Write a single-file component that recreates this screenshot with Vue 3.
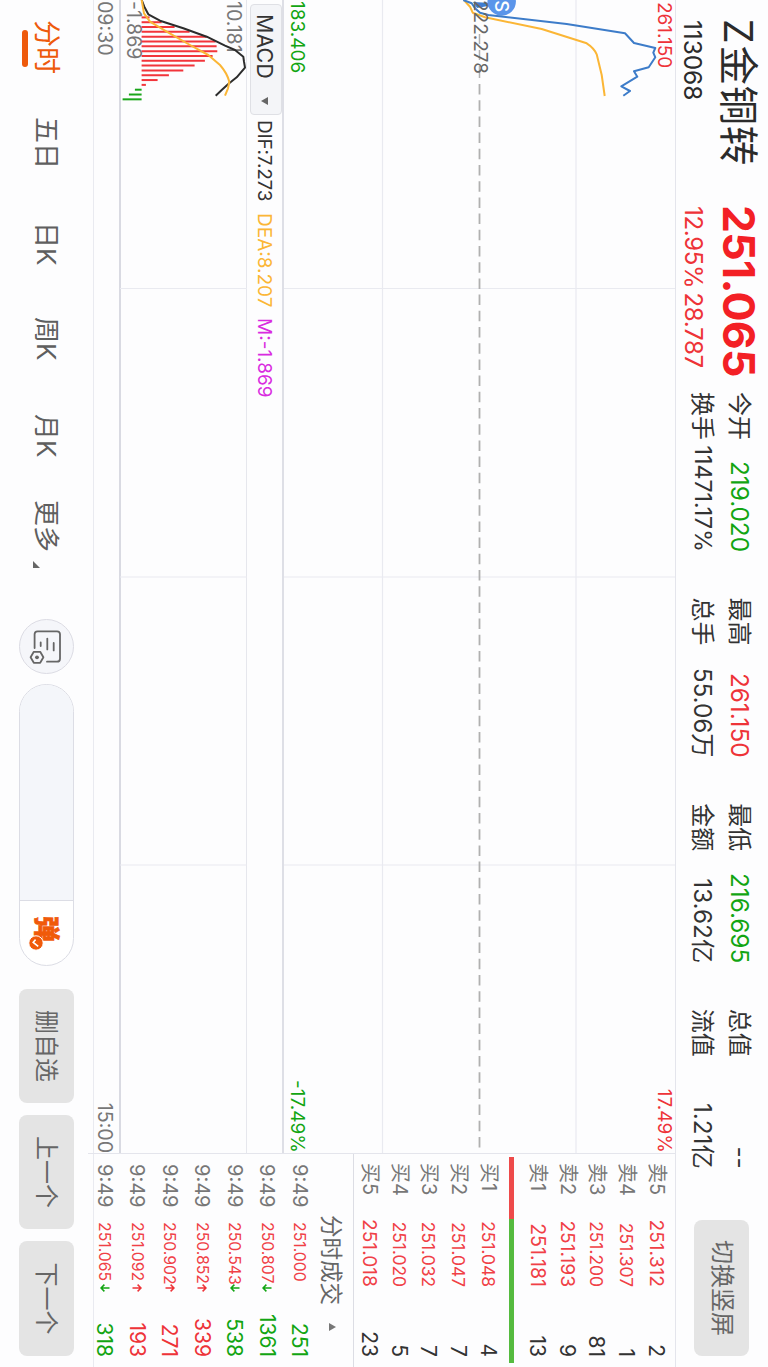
<script setup>
const stats = [
  { label: '今开', value: '219.020', tone: 'green', size: 'num' },
  { label: '最高', value: '261.150', tone: 'red', size: 'num' },
  { label: '最低', value: '216.695', tone: 'green', size: 'num' },
  { label: '总值', value: '--', tone: 'plain', size: 'num' },
  { label: '换手', value: '11471.17%', tone: 'plain', size: 'tight' },
  { label: '总手', value: '55.06万', tone: 'plain', size: 'num' },
  { label: '金额', value: '13.62亿', tone: 'plain', size: 'num' },
  { label: '流值', value: '1.21亿', tone: 'plain', size: 'num' },
]
const sells = [
  ['卖5', '251.312', '2', 'big'],
  ['卖4', '251.307', '1', 'small'],
  ['卖3', '251.200', '81', 'small'],
  ['卖2', '251.193', '9', 'big'],
  ['卖1', '251.181', '13', 'mid'],
]
const buys = [
  ['买1', '251.048', '4', 'small'],
  ['买2', '251.047', '7', 'small'],
  ['买3', '251.032', '7', 'small'],
  ['买4', '251.020', '5', 'small'],
  ['买5', '251.018', '23', 'big'],
]
const ticks = [
  { price: '251.000', dir: '', vol: '251', tone: 'green' },
  { price: '250.807', dir: 'down', vol: '1361', tone: 'green' },
  { price: '250.543', dir: 'down', vol: '538', tone: 'green' },
  { price: '250.852', dir: 'up', vol: '339', tone: 'red' },
  { price: '250.902', dir: 'up', vol: '271', tone: 'red' },
  { price: '251.092', dir: 'up', vol: '193', tone: 'red' },
  { price: '251.065', dir: 'down', vol: '318', tone: 'green' },
]
const histogram = [8, 20, 33, 48, 65, 74, 75, 75.7, 71, 63.3, 53, 41.7, 27.3, 16, 4.3, -6.7, -12.7, -19]
  .map((h, i) => ({ x: 17.4 + i * 4.82, h }))
const tabs = [
  { text: '分时', cls: 't1', active: true },
  { text: '五日', cls: 't2' },
  { text: '日K', cls: 't3' },
  { text: '周K', cls: 't4' },
  { text: '月K', cls: 't5' },
  { text: '更多', cls: 't6', more: true },
]
</script>

<template>
  <div class="stage">
    <main class="screen">
      <header class="header">
        <div class="ident">
          <div class="name"><span class="z">Z</span>金铜转</div>
          <div class="code">113068</div>
        </div>
        <div class="quote red">
          <div class="last">251.065</div>
          <div class="change"><span>12.95%</span><span>28.787</span></div>
        </div>
        <div class="stats">
          <div v-for="s in stats" :key="s.label" class="stat">
            <span class="label">{{ s.label }}</span>
            <span class="value" :class="[s.tone, s.size]">{{ s.value }}</span>
          </div>
        </div>
        <button class="btn rotate">切换竖屏</button>
      </header>

      <section class="body">
        <div class="charts">
          <div class="main-chart">
            <svg width="1153" height="392" viewBox="0 92 1153 392">
              <g stroke="#e9eaf0" stroke-width="1.2">
                <path d="M0 192H1153M0 385.5H1153M288.5 92V484M577 92V484M865 92V484" />
              </g>
              <path d="M84 288.5H1153" stroke="#b0b0b0" stroke-width="1.8" stroke-dasharray="10.5 5.7" />
              <path d="M34 288.5H44M50 288.5H60M66 288.5H78" stroke="#b0b0b0" stroke-width="1.5" />
              <path d="M2 295L8 291L6 280L11 276L3 276Z" fill="#3f7dd0" />
              <circle cx="1.5" cy="266.3" r="14.2" fill="#5b95ea" />
              <text x="6.2" y="273" class="mark">S</text>
              <path class="line yellow" d="M0 304L3.5 301L6.7 298L12.7 295.3L17.3 283L29 226.3L43.3 181.3Q48 174 54.3 171.3L75 166.3L96 163.3" />
              <path class="line blue" d="M0 304.7L3.3 296.3L8.3 293L12.7 288L15 279.7L24 201.3L33.3 143L43 134L48 112.7L52.7 114.7L57.3 112.7L67.3 119.3L71.3 134L76.7 130.7L86.3 146.7L91 138L95.7 144.7" />
            </svg>
            <span class="tag top-left red">261.150</span>
            <span class="tag top-right red">17.49%</span>
            <span class="tag mid-left">222.278</span>
            <span class="tag bottom-left green">183.406</span>
            <span class="tag bottom-right green">-17.49%</span>
          </div>
          <div class="indicator">
            <button class="picker">MACD<i class="caret"></i></button>
            <span class="dif">DIF:7.273</span>
            <span class="dea">DEA:8.207</span>
            <span class="m">M:-1.869</span>
          </div>
          <div class="macd-chart">
            <svg width="1153" height="127" viewBox="0 521 1153 127">
              <path d="M288.5 521V648M577 521V648M865 521V648" stroke="#e9eaf0" stroke-width="1.2" />
              <text x="1" y="541.5" class="scale">10.181</text>
              <text x="1" y="641" class="scale">-1.869</text>
              <path
                v-for="b in histogram" :key="b.x"
                :d="`M${b.x} 626.4V${626.4 - b.h}`"
                :stroke="b.h > 0 ? '#f2353b' : '#19a519'" stroke-width="2"
              />
              <path class="line black" d="M0 626.3L6.7 623.7L14.3 619.7L20.7 608L28.3 584.7L36.7 561.3L45.7 543L50 533L56.7 524.7L61.7 524L67.7 523L77.3 531.3L84 539.7L90 546.3L95.7 552.3" />
              <path class="line yellow" d="M0 626.3L13.3 624L21.7 618L31.7 601.3L45 578L55 559.7L65 548Q73 541 81.7 538.7L88.3 540L95.7 543" />
            </svg>
          </div>
          <div class="axis"><span>09:30</span><span>15:00</span></div>
        </div>

        <aside class="panel">
          <div class="book">
            <div v-for="r in sells" :key="r[0]" class="order">
              <span class="side">{{ r[0] }}</span><span class="price" :class="r[3]">{{ r[1] }}</span><span class="qty">{{ r[2] }}</span>
            </div>
          </div>
          <div class="ratio"><i></i><b></b></div>
          <div class="book">
            <div v-for="r in buys" :key="r[0]" class="order">
              <span class="side">{{ r[0] }}</span><span class="price" :class="r[3]">{{ r[1] }}</span><span class="qty">{{ r[2] }}</span>
            </div>
          </div>
          <div class="deals-title">分时成交<i></i></div>
          <div v-for="t in ticks" :key="t.price" class="tick">
            <span class="time">9:49</span>
            <span class="deal">{{ t.price }}</span>
            <svg class="arrow" width="10" height="10" viewBox="0 0 10 10" :class="t.tone">
              <path v-if="t.dir === 'down'" d="M5 .5V9M1.6 5.6L5 9L8.4 5.6" />
              <path v-if="t.dir === 'up'" d="M5 9.5V1M1.6 4.4L5 1L8.4 4.4" />
            </svg>
            <span class="vol" :class="t.tone">{{ t.vol }}</span>
          </div>
        </aside>
      </section>

      <footer class="footer">
        <nav class="tabs">
          <span v-for="t in tabs" :key="t.text" class="tab" :class="[t.cls, { active: t.active }]">
            {{ t.text }}<i v-if="t.more" class="corner"></i>
          </span>
        </nav>
        <button class="round">
          <svg width="54" height="54" viewBox="620 695 54 54" fill="none" stroke="#666" stroke-width="1.8" stroke-linecap="round">
            <path d="M648 733.4H634.3Q631.3 733.4 631.3 730.4V711Q631.3 708 634.3 708H658.7Q661.7 708 661.7 711V721" />
            <path d="M643 714.3H650.4M638.6 720.7H649.4M642.3 727.3H646" />
            <path d="M657.3 724.6L662.8 727.8V734.2L657.3 737.4L651.8 734.2V727.8Z" stroke-linejoin="round" />
            <circle cx="657.3" cy="731" r="1.9" fill="#666" stroke="none" />
          </svg>
        </button>
        <div class="pill">
          <div class="field"></div>
          <div class="bullet">弹
            <svg class="badge" width="16" height="16" viewBox="0 0 16 16">
              <circle cx="8" cy="8" r="7.2" fill="#f05a0a" stroke="#fff" stroke-width="1" />
              <path d="M4.6 8.4L7.3 10.8L11.4 5.8" fill="none" stroke="#fff" stroke-width="1.6" />
            </svg>
          </div>
        </div>
        <button class="btn b1">删自选</button>
        <button class="btn b2">上一个</button>
        <button class="btn b3">下一个</button>
      </footer>
    </main>
  </div>
</template>

<style>
body { margin: 0; background: #fdfdfe; }
</style>

<style scoped>
* { box-sizing: border-box; }
.stage { width: 768px; height: 1367px; overflow: hidden; }
.screen {
  width: 1367px; height: 768px; display: grid; grid-template-rows: 92px 583px 93px;
  transform-origin: 0 0; transform: rotate(90deg) translateY(-768px);
  background: #fdfdfe; color: #333; white-space: nowrap;
  font-family: Inter, "Noto Sans CJK SC", sans-serif;
}
button { border: 0; padding: 0; font-family: inherit; color: inherit; }

.header { display: flex; }
.ident { width: 206px; padding: 6px 0 0 19px; color: #2b2b2b; }
.name { font-size: 39.5px; line-height: 48px; letter-spacing: .6px; }
.z { display: inline-block; width: 26.5px; font-size: 39px; }
.code { font-size: 24.5px; line-height: 28px; margin-top: 7px; padding-left: 1px; letter-spacing: -.1px; }
.quote { width: 186px; padding-top: 5px; }
.last { font-size: 44.5px; font-weight: 700; line-height: 48px; color: #f32025; letter-spacing: -.7px; margin-left: -1px; }
.change { display: flex; gap: 4px; font-size: 24px; line-height: 28px; margin-top: 8px; letter-spacing: -.3px; }
.stats { display: grid; grid-template-columns: repeat(4, 160px); grid-auto-rows: 37px; column-gap: 45.6px; padding-top: 9.5px; width: 828px; }
.stat { display: flex; justify-content: space-between; align-items: center; height: 37px; line-height: 37px; }
.label { font-size: 24px; }
.value { font-size: 24.3px; }
.tight { font-size: 23.2px; }
.btn { background: #e4e4e4; border-radius: 8px; color: #666; font-size: 24px; height: 55px; padding-bottom: 4px; }
.rotate { width: 136px; margin-top: 19px; padding-bottom: 7px; }

.body { display: grid; grid-template-columns: 1153px 214px; border-top: 1px solid #e4e5ec; border-bottom: 1px solid #e9eaf0; }
.charts { display: flex; flex-direction: column; }
.main-chart { position: relative; height: 393px; border-bottom: 2px solid #dedfe6; overflow: hidden; }
.main-chart svg, .macd-chart svg { display: block; margin-top: -1px; }
.line { fill: none; stroke-width: 2; stroke-linejoin: round; }
.blue { stroke: #3d7cc9; }
.yellow { stroke: #fbb636; }
.black { stroke: #2c2c2c; }
.mark { fill: #fff; font-size: 18.5px; font-weight: 500; text-anchor: middle; }
.tag { position: absolute; font-size: 19px; line-height: 24px; color: #666; }
.top-left { left: 2px; top: -1px; }
.top-right { right: 0; top: -1px; }
.mid-left { left: 0; top: 183px; }
.bottom-left { left: 1px; top: 366px; }
.bottom-right { right: 0; top: 366px; }
.indicator { height: 36px; display: flex; align-items: center; font-size: 19px; border-bottom: 1px solid #e6e7ed; }
.picker { align-self: flex-start; width: 111px; height: 32px; margin-left: 4px; border: 1px solid #dfe0e5; border-radius: 4px; background: #f4f5f8; font-size: 21.5px; display: flex; align-items: center; padding: 2px 0 0 9px; }
.caret { border: 4px solid transparent; border-top: 7px solid #666; border-bottom: 0; margin-left: 18px; }
.dif { margin-left: 5px; width: 93px; letter-spacing: -.2px; }
.dea { width: 105px; color: #fbb636; }
.m { color: #d92be0; }
.macd-chart { height: 127px; border-bottom: 2px solid #d9dae2; }
.scale { font-size: 19.5px; fill: #777; }
.axis { display: flex; justify-content: space-between; line-height: 29px; height: 25px; font-size: 19.6px; color: #777; padding-left: 1px; }

.panel { border-left: 1px solid #e4e5ec; }
.book { padding: 4px 10px 0 9px; height: 153px; }
.order { display: grid; grid-template-columns: 50px 74px 1fr; height: 29.8px; line-height: 29.8px; align-items: center; font-size: 21px; }
.side { color: #777; font-size: 20px; }
.price { text-align: right; color: #f04046; }
.small { font-size: 17.4px; }
.mid { font-size: 19.6px; }
.big { font-size: 19.2px; }
.qty { text-align: right; }
.ratio { display: flex; height: 5px; margin: 8px 4px 2px 3px; }
.ratio i { width: 62px; background: #ee4a4a; }
.ratio b { flex: 1; background: #55bb3f; }
.deals-title { height: 38px; border-top: 1px solid #dcdde4; display: flex; align-items: center; padding: 3px 0 0 61px; font-size: 22.5px; color: #666; }
.deals-title i { border: 4.5px solid transparent; border-bottom: 7px solid #777; border-top: 0; margin-left: 18px; }
.tick { display: flex; align-items: center; height: 32.5px; padding: 0 10px 0 10px; font-size: 20px; }
.time { width: 58px; color: #777; }
.deal { width: 60px; font-size: 15.8px; color: #f04046; }
.arrow { flex: none; margin-left: 1px; fill: none; stroke: currentColor; stroke-width: 1.5; }
.vol { margin-left: auto; font-size: 21px; }

.footer { display: flex; padding-top: 19px; }
.tabs { display: flex; width: 619px; padding-left: 20px; }
.tab { position: relative; height: 56px; line-height: 55px; font-size: 26px; color: #5f5f5f; }
.t1 { width: 97px; font-size: 27px; }
.t2 { width: 105px; }
.t3 { width: 95px; }
.t4 { width: 97px; }
.t5 { width: 86px; }
.active { color: #ee5a0c; }
.active::after { content: ""; position: absolute; left: 10px; top: 46px; width: 37px; height: 6px; border-radius: 3px; background: #ee5a0c; }
.corner { display: inline-block; border-left: 7px solid transparent; border-bottom: 7px solid #666; margin-left: 9px; vertical-align: -4px; }
.round { width: 55px; height: 55px; border-radius: 50%; border: 1px solid #dcdce4; background: #f5f6fa; display: grid; place-items: center; }
.pill { width: 282px; height: 55px; margin-left: 10px; border: 1.5px solid #dcdde5; border-radius: 28px; display: flex; overflow: hidden; background: #fff; }
.field { width: 216px; background: #f4f6fa; border-right: 1px solid #dcdde5; }
.bullet { position: relative; padding-left: 15px; line-height: 53px; font-size: 26px; font-weight: 900; color: #f05a0a; -webkit-text-stroke: .6px #f05a0a; }
.badge { position: absolute; left: 34px; top: 29px; }
.b1 { width: 114px; margin-left: 23px; }
.b2 { width: 114px; margin-left: 12px; }
.b3 { width: 115px; margin-left: 12px; }

.red { color: #ee3338; }
.green { color: #12a512; }
.plain { color: #333; }
</style>
